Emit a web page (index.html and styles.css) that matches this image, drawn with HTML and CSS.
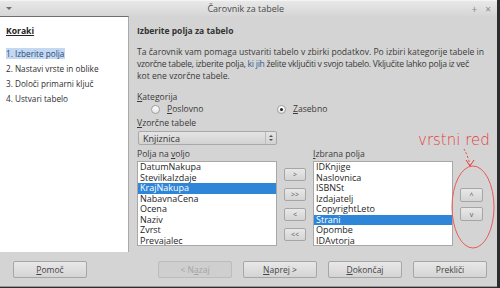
FILE: index.html
```html
<!DOCTYPE html>
<html lang="sl">
  <head>
    <meta charset="UTF-8" />
    <title>Čarovnik za tabele</title>
    <link rel="stylesheet" href="styles.css">
  </head>
  <body>
    <div class="window">
      <div class="titlebar">
        <span class="menu-arrow"></span>
        <span class="title">Čarovnik za tabele</span>
        <span class="title-btns"><span>+</span><span>×</span></span>
      </div>

      <div class="main">
        <div class="sidebar">
          <div class="steps-head">Koraki</div>
          <ul class="steps">
            <li><span class="current">1. Izberite polja</span></li>
            <li>2. Nastavi vrste in oblike</li>
            <li>3. Določi primarni ključ</li>
            <li>4. Ustvari tabelo</li>
          </ul>
        </div>

        <div class="content">
          <h1>Izberite polja za tabelo</h1>
          <p class="intro">
            <span class="line">Ta čarovnik vam pomaga ustvariti tabelo v zbirki podatkov. Po izbiri kategorije tabele in</span>
            <span class="line tight">vzorčne tabele, izberite polja, <span class="hl">ki jih</span> želite vključiti v svojo tabelo. Vključite lahko polja iz več</span>
            <span class="line">kot ene vzorčne tabele.</span>
          </p>

          <div class="label"><u>K</u>ategorija</div>
          <div class="radios">
            <label class="radio"><span class="dot"></span><span><u>P</u>oslovno</span></label>
            <label class="radio checked"><span class="dot"></span><span><u>Z</u>asebno</span></label>
          </div>

          <div class="label"><u>V</u>zorčne tabele</div>
          <div class="select">
            <span>Knjiznica</span>
            <span class="spin"></span>
          </div>

          <div class="fields">
            <div class="col">
              <div class="label">Polja na <u>v</u>oljo</div>
              <ul class="listbox">
                <li>DatumNakupa</li>
                <li>StevilkaIzdaje</li>
                <li class="sel">KrajNakupa</li>
                <li>NabavnaCena</li>
                <li>Ocena</li>
                <li>Naziv</li>
                <li>Zvrst</li>
                <li>Prevajalec</li>
              </ul>
            </div>
            <div class="movers">
              <button class="small">&gt;</button>
              <button class="small">&gt;&gt;</button>
              <button class="small">&lt;</button>
              <button class="small">&lt;&lt;</button>
            </div>
            <div class="col">
              <div class="label"><u>I</u>zbrana polja</div>
              <ul class="listbox">
                <li>IDKnjige</li>
                <li>Naslovnica</li>
                <li>ISBNSt</li>
                <li>Izdajatelj</li>
                <li>CopyrightLeto</li>
                <li class="sel">Strani</li>
                <li>Opombe</li>
                <li>IDAvtorja</li>
              </ul>
            </div>
            <div class="order">
              <button class="small tall">^</button>
              <button class="small tall">v</button>
            </div>
          </div>
        </div>
      </div>

      <div class="footer">
        <button class="btn"><u>P</u>omoč</button>
        <span class="spacer"></span>
        <button class="btn" disabled>&lt; N<u>a</u>zaj</button>
        <button class="btn"><u>N</u>aprej &gt;</button>
        <button class="btn"><u>D</u>okončaj</button>
        <button class="btn">Prekliči</button>
      </div>

      <!-- red hand-drawn note over the order buttons -->
      <div class="note">vrstni red</div>
      <svg class="note-marks" width="500" height="288" viewBox="0 0 500 288">
        <path d="M464 149 Q468 156 470 165" fill="none" stroke="#e83a3a" stroke-width="1" stroke-dasharray="2 2" />
        <path d="M466 160 L470 166 L474 160" fill="none" stroke="#e83a3a" stroke-width="1" />
        <ellipse cx="473" cy="207" rx="21" ry="41" fill="none" stroke="#ec5a5a" stroke-width="1" />
      </svg>
    </div>
  </body>
</html>
```

FILE: styles.css
```css
* {
  box-sizing: border-box;
}
body {
  margin: 0;
  width: 500px;
  height: 288px;
  overflow: hidden;
  background: #2e2c2a;
  font-family: 'Open Sans', 'Noto Sans', sans-serif;
  font-size: 8.6px;
  color: #3a3a3a;
}
ul {
  list-style: none;
  margin: 0;
  padding: 0;
}
u {
  text-decoration: underline;
}
.window {
  position: relative;
  width: 497px;
  height: 287px;
  background: #d4d4d4;
  display: flex;
  flex-direction: column;
  border-bottom: 1px solid #9a9a9a;
}
.titlebar {
  height: 16px;
  flex: none;
  display: flex;
  align-items: center;
  padding: 0 6px;
  background: linear-gradient(#e8e8e8, #d6d6d6);
  border-top: 1px solid #f4f4f4;
}
.menu-arrow {
  width: 0;
  height: 0;
  border-left: 3px solid transparent;
  border-right: 3px solid transparent;
  border-top: 3px solid #707070;
}
.title {
  flex: 1;
  text-align: center;
  font-size: 9px;
  color: #4a4a4a;
  padding-left: 8px;
}
.title-btns {
  display: flex;
  gap: 8px;
  color: #8a8a8a;
  font-size: 10px;
}
.main {
  flex: 1;
  display: flex;
  min-height: 0;
}
.sidebar {
  width: 129px;
  flex: none;
  background: #fff;
  border-top: 1px solid #6e6e6e;
  border-right: 1px solid #a9a9a9;
  padding: 8px 0 0 6px;
}
.steps-head {
  font-weight: bold;
  text-decoration: underline;
  line-height: 12px;
  height: 12px;
  margin-bottom: 11px;
  color: #222;
}
.steps li {
  font-size: 8.2px;
  line-height: 11px;
  height: 15px;
  white-space: nowrap;
  color: #2e2e2e;
}
.current {
  background: #c4d9f1;
  color: #2a4a7a;
  display: inline-block;
  padding-right: 1px;
}
.content {
  flex: 1;
  padding: 9px 0 0 8px;
}
h1 {
  margin: 0;
  font-size: 8.5px;
  font-weight: bold;
  line-height: 12px;
  color: #333;
}
.intro {
  margin: 9px 0 9px;
  line-height: 12px;
  white-space: nowrap;
}
.line {
  display: block;
}
.tight {
  letter-spacing: -0.26px;
}
.hl {
  color: #2f5a94;
}
.label {
  line-height: 12px;
  white-space: nowrap;
}
.radios {
  display: flex;
  height: 12px;
  align-items: center;
  padding-left: 14px;
}
.radio {
  display: flex;
  align-items: center;
  gap: 7px;
  width: 126px;
}
.dot {
  width: 9px;
  height: 9px;
  border-radius: 50%;
  border: 1px solid #a0a0a0;
  background: linear-gradient(#ffffff, #e4e4e4);
  display: flex;
  align-items: center;
  justify-content: center;
}
.checked .dot::after {
  content: '';
  width: 3px;
  height: 3px;
  border-radius: 50%;
  background: #222;
}
.radios + .label {
  margin-top: 2px;
}
.select {
  margin: 2px 0 3px 1px;
  width: 139px;
  height: 14px;
  border: 1px solid #a8a8a8;
  border-radius: 2px;
  background: linear-gradient(#e4e4e4, #d2d2d2);
  display: flex;
  align-items: center;
  justify-content: space-between;
  padding-left: 4px;
  font-size: 9px;
  color: #333;
}
.spin {
  width: 11px;
  height: 100%;
  border-left: 1px solid #bdbdbd;
  position: relative;
}
.spin::before,
.spin::after {
  content: '';
  position: absolute;
  left: 3px;
  border-left: 2px solid transparent;
  border-right: 2px solid transparent;
}
.spin::before {
  top: 3px;
  border-bottom: 2px solid #555;
}
.spin::after {
  bottom: 3px;
  border-top: 2px solid #555;
}
.fields {
  display: flex;
  align-items: flex-start;
}
.col {
  width: 140px;
  flex: none;
}
.listbox {
  margin-top: 1px;
  height: 85px;
  overflow: hidden;
  background: #fff;
  border: 1px solid #a8a8a8;
  font-size: 9px;
  color: #1e1e1e;
}
.listbox li {
  height: 10.5px;
  line-height: 10.5px;
  padding-left: 2px;
  white-space: nowrap;
}
.listbox li.sel {
  background: #2f86d8;
  color: #fff;
}
.movers {
  width: 36px;
  flex: none;
  display: flex;
  flex-direction: column;
  align-items: center;
  gap: 7px;
  padding-top: 20px;
}
.order {
  flex: none;
  display: flex;
  flex-direction: column;
  gap: 5px;
  padding: 40px 0 0 7px;
}
button {
  font-family: inherit;
  color: #444;
  border: 1px solid #a6a6a6;
  border-radius: 2px;
  background: linear-gradient(#e8e8e8, #d4d4d4);
  padding: 0;
}
.small {
  width: 22px;
  height: 13px;
  font-size: 7px;
  line-height: 11px;
  color: #555;
}
.small.tall {
  width: 23px;
  height: 14px;
}
.footer {
  height: 34px;
  flex: none;
  display: flex;
  align-items: flex-start;
  padding: 9px 10px 0 13px;
  gap: 11px;
}
.spacer {
  flex: 1;
}
.btn {
  width: 74px;
  height: 17px;
  font-size: 8.5px;
}
.btn:disabled {
  color: #a4a4a4;
  background: #cfcfcf;
  border-color: #bcbcbc;
}
.note {
  position: absolute;
  left: 418px;
  top: 131px;
  font-size: 15px;
  line-height: 18px;
  color: #e83a3a;
  font-family: 'DejaVu Sans', sans-serif;
  font-weight: 300;
}
.note-marks {
  position: absolute;
  left: 0;
  top: 0;
  pointer-events: none;
}
```
